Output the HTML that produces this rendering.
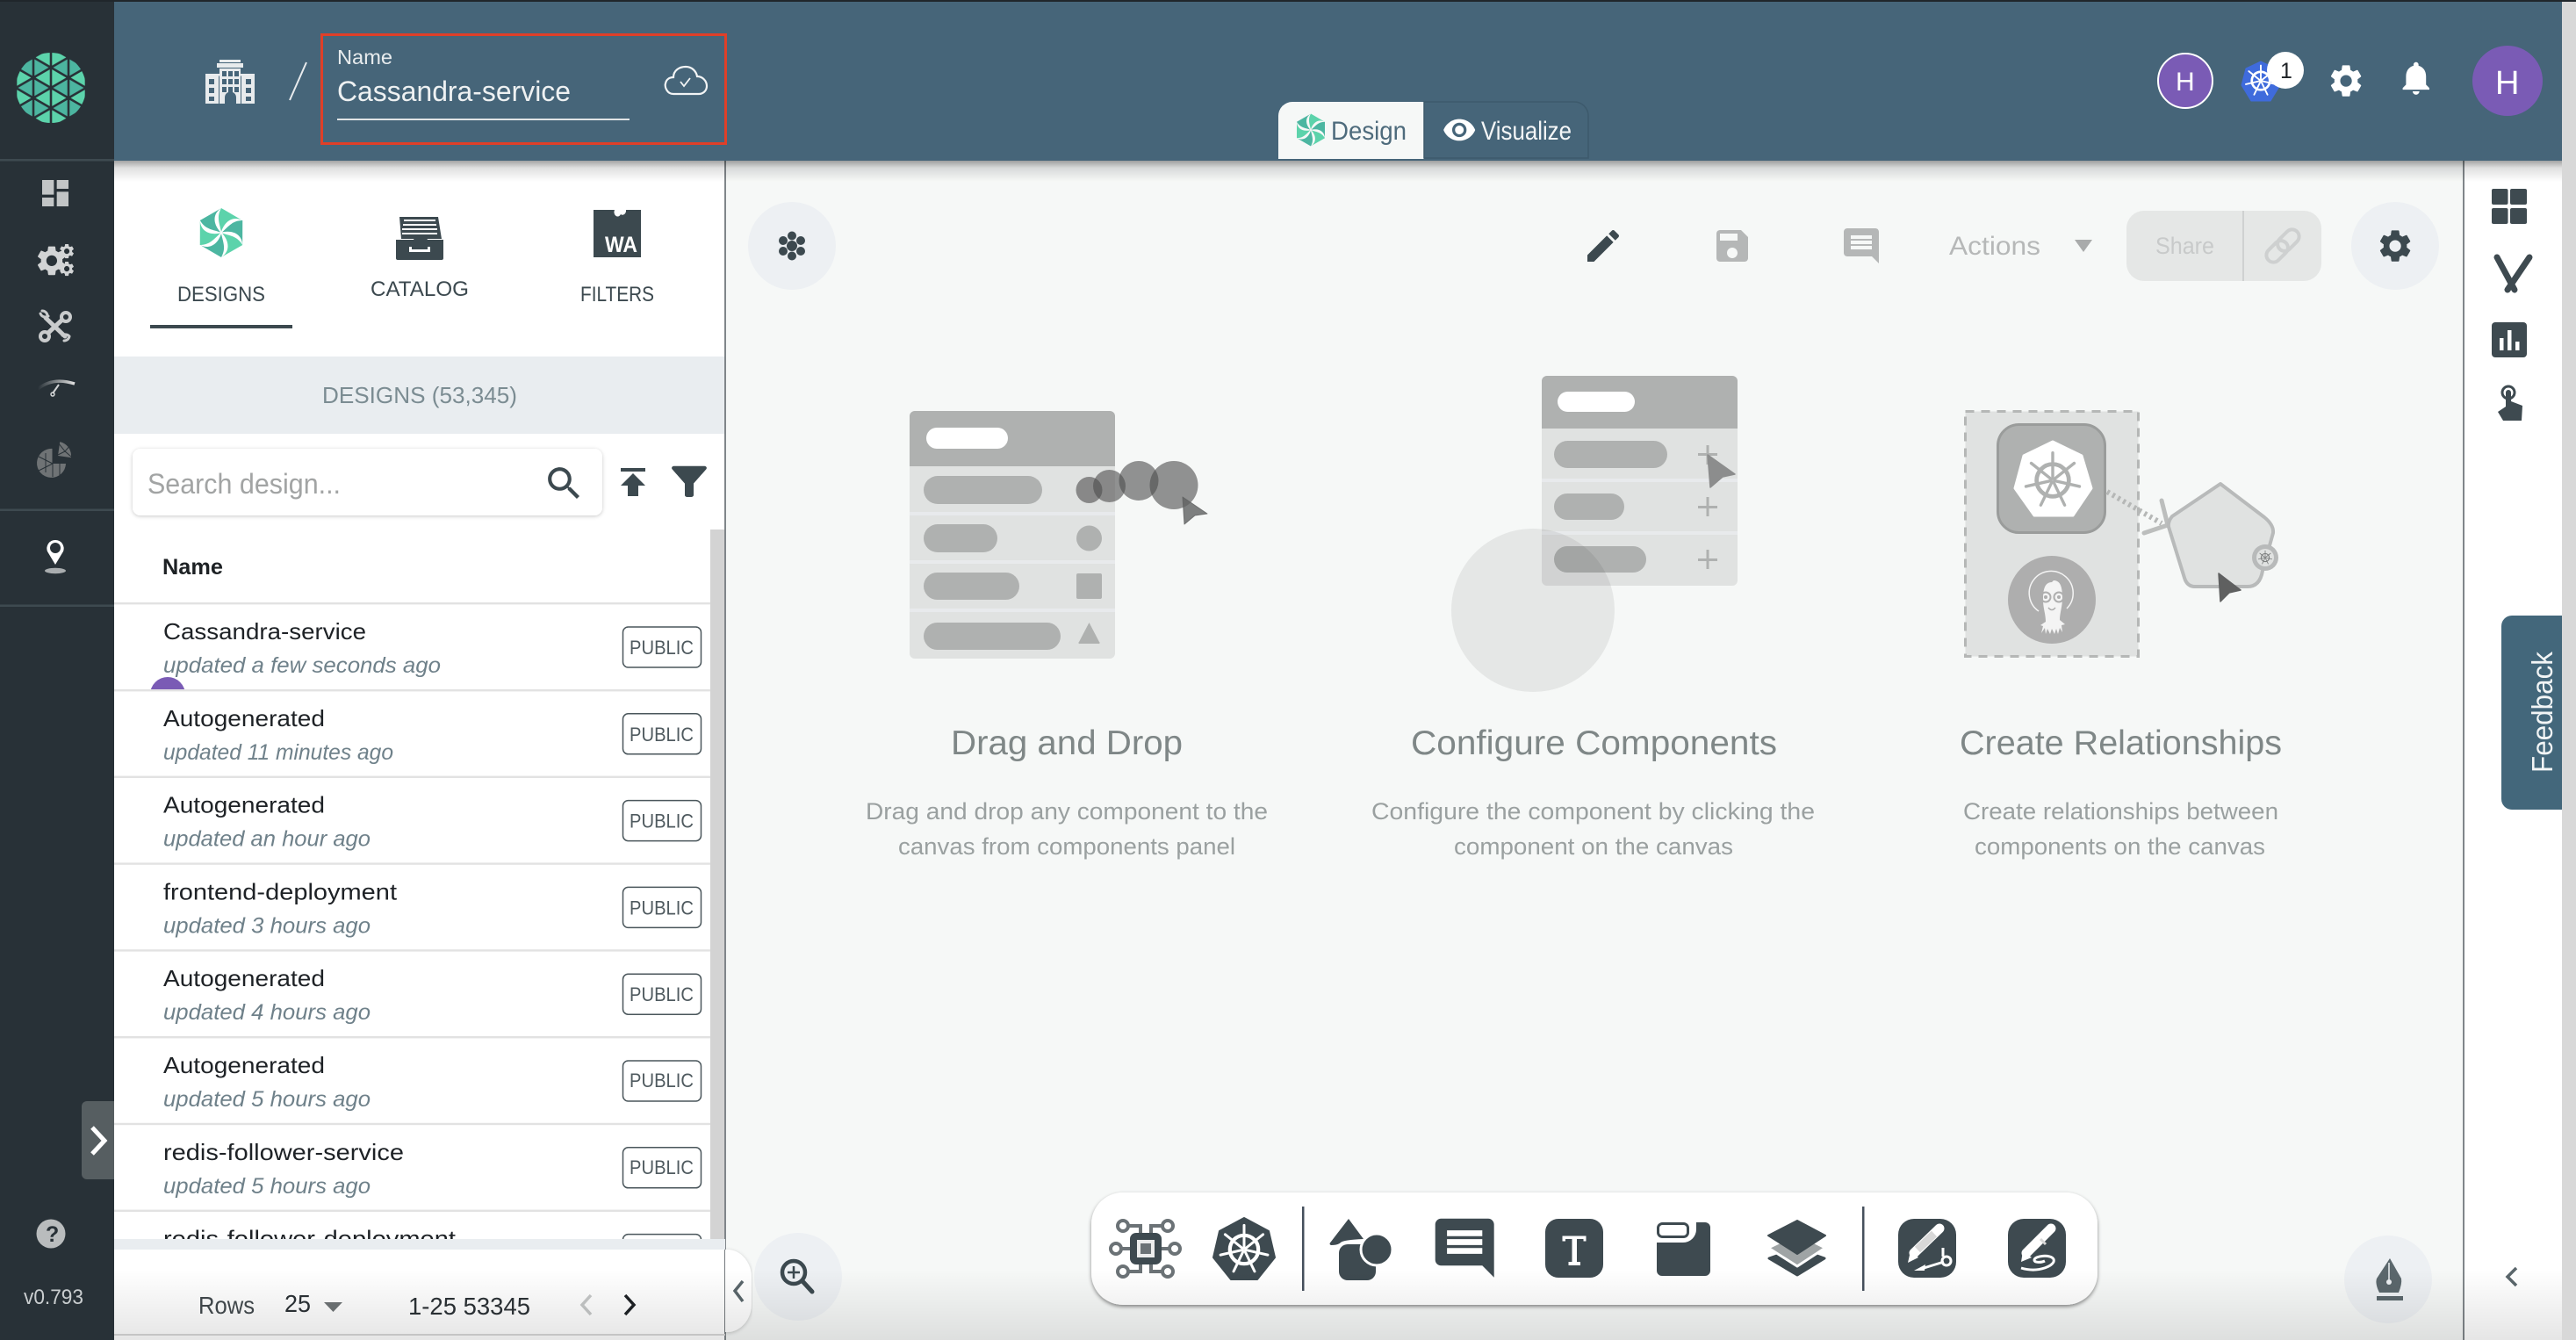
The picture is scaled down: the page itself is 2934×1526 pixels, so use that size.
<!DOCTYPE html>
<html lang="en"><head><meta charset="utf-8"><title>Designer</title>
<style>html,body{margin:0;padding:0;width:2934px;height:1526px;overflow:hidden;background:#f6f8f7}svg{display:block}text{font-family:"Liberation Sans",sans-serif}</style></head>
<body>
<svg xmlns="http://www.w3.org/2000/svg" width="2934" height="1526" viewBox="0 0 2934 1526">
<defs>
<path id="gearP" d="M19.14 12.94c.04-.3.06-.61.06-.94 0-.32-.02-.64-.07-.94l2.03-1.58c.18-.14.23-.41.12-.61l-1.92-3.32c-.12-.22-.37-.29-.59-.22l-2.39.96c-.5-.38-1.03-.7-1.62-.94l-.36-2.54c-.04-.24-.24-.41-.48-.41h-3.84c-.24 0-.43.17-.47.41l-.36 2.54c-.59.24-1.13.57-1.62.94l-2.39-.96c-.22-.08-.47 0-.59.22L2.74 8.87c-.12.21-.08.47.12.61l2.03 1.58c-.05.3-.09.63-.09.94s.02.64.07.94l-2.03 1.58c-.18.14-.23.41-.12.61l1.92 3.32c.12.22.37.29.59.22l2.39-.96c.5.38 1.03.7 1.62.94l.36 2.54c.05.24.24.41.48.41h3.84c.24 0 .44-.17.47-.41l.36-2.54c.59-.24 1.13-.56 1.62-.94l2.39.96c.22.08.47 0 .59-.22l1.92-3.32c.12-.22.07-.47-.12-.61l-2.01-1.58zM12 15.6c-1.98 0-3.6-1.62-3.6-3.6s1.62-3.6 3.6-3.6 3.6 1.62 3.6 3.6-1.62 3.6-3.6 3.6z"/>
<g id="wheel" fill="none" stroke-linecap="round">
<circle r="27" stroke-width="7"/>
<g stroke-width="5">
<line y1="-6" y2="-46"/><line y1="-6" y2="-46" transform="rotate(51.43)"/><line y1="-6" y2="-46" transform="rotate(102.86)"/><line y1="-6" y2="-46" transform="rotate(154.29)"/><line y1="-6" y2="-46" transform="rotate(205.71)"/><line y1="-6" y2="-46" transform="rotate(257.14)"/><line y1="-6" y2="-46" transform="rotate(308.57)"/>
</g>
<circle r="3" stroke-width="5"/>
</g>
<g id="swirl">
<path fill="#5cd3ab" d="M0,-50 L43,-25 C26,-34 8,-26 0,-2 C-4,-20 -10,-32 0,-50Z"/>
<path fill="#4cb6a1" d="M0,-50 L43,-25 C26,-34 8,-26 0,-2 C-4,-20 -10,-32 0,-50Z" transform="rotate(60)"/>
<path fill="#5cd3ab" d="M0,-50 L43,-25 C26,-34 8,-26 0,-2 C-4,-20 -10,-32 0,-50Z" transform="rotate(120)"/>
<path fill="#4cb6a1" d="M0,-50 L43,-25 C26,-34 8,-26 0,-2 C-4,-20 -10,-32 0,-50Z" transform="rotate(180)"/>
<path fill="#5cd3ab" d="M0,-50 L43,-25 C26,-34 8,-26 0,-2 C-4,-20 -10,-32 0,-50Z" transform="rotate(240)"/>
<path fill="#4cb6a1" d="M0,-50 L43,-25 C26,-34 8,-26 0,-2 C-4,-20 -10,-32 0,-50Z" transform="rotate(300)"/>
</g>
<pattern id="lat" patternUnits="userSpaceOnUse" x="38" y="88.45" width="40" height="23.1">
<rect width="40" height="23.1" fill="#5cd3ab"/>
<path d="M0,0 L0,23.1 L20,11.55Z M40,0 L40,23.1 L20,11.55Z" fill="#4cb5a0"/>
<path d="M0,0V23.1M20,0V23.1M40,0V23.1M0,0L40,23.1M0,23.1L40,0" stroke="#283137" stroke-width="2.6" fill="none"/>
</pattern>
<clipPath id="listClip"><rect x="130" y="600" width="679" height="811"/></clipPath>
<clipPath id="purpleClip"><rect x="130" y="700" width="400" height="85"/></clipPath>
<linearGradient id="hs" x1="0" y1="0" x2="0" y2="1"><stop offset="0" stop-color="#000" stop-opacity=".36"/><stop offset=".35" stop-color="#000" stop-opacity=".12"/><stop offset="1" stop-color="#000" stop-opacity="0"/></linearGradient>
<linearGradient id="bs" x1="0" y1="0" x2="0" y2="1"><stop offset="0" stop-color="#000" stop-opacity="0"/><stop offset="1" stop-color="#000" stop-opacity=".1"/></linearGradient>
<linearGradient id="ga" x1="0" y1="0" x2="1" y2="0"><stop offset="0" stop-color="#dcdcdc" stop-opacity="0"/><stop offset="1" stop-color="#e2e2e2"/></linearGradient>
<filter id="tb" x="-3%" y="-10%" width="106%" height="125%"><feDropShadow dx="0" dy="2" stdDeviation="2" flood-color="#000" flood-opacity=".45"/></filter>
<filter id="sb" x="-3%" y="-10%" width="106%" height="125%"><feDropShadow dx="0" dy="1" stdDeviation="2" flood-color="#000" flood-opacity=".22"/></filter>
</defs>

<!-- base -->
<rect width="2934" height="1526" fill="#f6f8f7"/>
<rect x="2806" y="183" width="112" height="1343" fill="#fff"/>
<rect x="2918" y="0" width="16" height="1526" fill="#d8d8d8"/>
<rect x="2805" y="183" width="2" height="1343" fill="#80868a"/>

<!-- left panel -->
<rect x="130" y="183" width="696" height="1343" fill="#fff"/>
<rect x="825" y="183" width="2" height="1343" fill="#80868a"/>
<use href="#swirl" transform="translate(252,265) scale(.56)"/>
<text x="202" y="343" font-size="24" fill="#3c494f" textLength="100" lengthAdjust="spacingAndGlyphs">DESIGNS</text>
<rect x="171" y="370" width="162" height="4" fill="#3c494f"/>
<!-- catalog icon -->
<path d="M457,247h44l4,25h-46z" fill="#3c494f" transform="translate(-2,0)"/>
<path d="M460,251h36M459,256h38M458,261h40M458,266h40" stroke="#fff" stroke-width="2"/>
<path d="M451,273h20l2,-4h12l2,4h18v21a2,2 0 0 1-2,2h-50a2,2 0 0 1-2,-2z" fill="#3c494f"/>
<path d="M466,281v6h24v-6h-3v3h-18v-3z" fill="#fff"/>
<text x="422" y="337" font-size="24" fill="#3c494f" textLength="112" lengthAdjust="spacingAndGlyphs">CATALOG</text>
<!-- WA icon -->
<path d="M676,239h24a4,5 0 0 0 7,5a4,5 0 0 0 6,-5h17v54h-54z" fill="#3c494f"/>
<text x="689" y="287" font-size="25" font-weight="bold" fill="#fff" textLength="37" lengthAdjust="spacingAndGlyphs">WA</text>
<text x="661" y="343" font-size="24" fill="#3c494f" textLength="84" lengthAdjust="spacingAndGlyphs">FILTERS</text>
<rect x="130" y="406" width="695" height="88" fill="#e9edf0"/>
<text x="367" y="459" font-size="26" fill="#7b8c92" textLength="222" lengthAdjust="spacingAndGlyphs">DESIGNS (53,345)</text>
<rect x="151" y="511" width="535" height="76" rx="9" fill="#fff" filter="url(#sb)"/>
<text x="168" y="562" font-size="32" fill="#a2a4a4" textLength="220" lengthAdjust="spacingAndGlyphs">Search design...</text>
<path transform="translate(618,526) scale(2.05)" fill="#3c494f" d="M15.5 14h-.79l-.28-.27C15.41 12.59 16 11.11 16 9.5 16 5.91 13.09 3 9.5 3S3 5.91 3 9.5 5.91 16 9.5 16c1.61 0 3.09-.59 4.23-1.57l.27.28v.79l5 4.99L20.49 19l-4.99-5zm-6 0C7.01 14 5 11.99 5 9.5S7.01 5 9.5 5 14 7.01 14 9.5 11.99 14 9.5 14z"/>
<path transform="translate(697,525) scale(2)" fill="#3c494f" d="M5 4v2h14V4H5zm0 10h4v6h6v-6h4l-7-7-7 7z"/>
<path transform="translate(755,522) scale(2.5,2.2)" fill="#3c494f" d="M4.25 5.61C6.27 8.2 10 13 10 13v6c0 .55.45 1 1 1h2c.55 0 1-.45 1-1v-6s3.72-4.8 5.74-7.39c.51-.66.04-1.61-.79-1.61H5.04c-.83 0-1.3.95-.79 1.61z"/>
<text x="185" y="654" font-size="25" font-weight="bold" fill="#1d2124" textLength="69" lengthAdjust="spacingAndGlyphs">Name</text>

<!-- list -->
<rect x="809" y="603" width="16" height="808" fill="#d3d3d3"/>
<circle cx="191" cy="791" r="20" fill="#7a5bb5" clip-path="url(#purpleClip)"/>
<g fill="#e2e2e2">
<rect x="130" y="686" width="679" height="2.4"/><rect x="130" y="785" width="679" height="2.4"/><rect x="130" y="883.6" width="679" height="2.4"/><rect x="130" y="982.4" width="679" height="2.4"/><rect x="130" y="1081.2" width="679" height="2.4"/><rect x="130" y="1180" width="679" height="2.4"/><rect x="130" y="1278.8" width="679" height="2.4"/><rect x="130" y="1377.6" width="679" height="2.4"/>
</g>
<g clip-path="url(#listClip)">
<g font-size="26" fill="#1e2226">
<text x="186" y="728" textLength="231" lengthAdjust="spacingAndGlyphs">Cassandra-service</text>
<text x="186" y="827" textLength="184" lengthAdjust="spacingAndGlyphs">Autogenerated</text>
<text x="186" y="925.6" textLength="184" lengthAdjust="spacingAndGlyphs">Autogenerated</text>
<text x="186" y="1024.4" textLength="266" lengthAdjust="spacingAndGlyphs">frontend-deployment</text>
<text x="186" y="1123.2" textLength="184" lengthAdjust="spacingAndGlyphs">Autogenerated</text>
<text x="186" y="1222" textLength="184" lengthAdjust="spacingAndGlyphs">Autogenerated</text>
<text x="186" y="1320.8" textLength="274" lengthAdjust="spacingAndGlyphs">redis-follower-service</text>
<text x="186" y="1419.6" textLength="333" lengthAdjust="spacingAndGlyphs">redis-follower-deployment</text>
</g>
<g font-size="25" font-style="italic" fill="#6f818a">
<text x="186" y="766" textLength="316" lengthAdjust="spacingAndGlyphs">updated a few seconds ago</text>
<text x="186" y="865" textLength="262" lengthAdjust="spacingAndGlyphs">updated 11 minutes ago</text>
<text x="186" y="963.6" textLength="236" lengthAdjust="spacingAndGlyphs">updated an hour ago</text>
<text x="186" y="1062.4" textLength="236" lengthAdjust="spacingAndGlyphs">updated 3 hours ago</text>
<text x="186" y="1161.2" textLength="236" lengthAdjust="spacingAndGlyphs">updated 4 hours ago</text>
<text x="186" y="1260" textLength="236" lengthAdjust="spacingAndGlyphs">updated 5 hours ago</text>
<text x="186" y="1358.8" textLength="236" lengthAdjust="spacingAndGlyphs">updated 5 hours ago</text>
</g>
<g fill="#fff" stroke="#4a565b" stroke-width="1.5">
<rect x="709.5" y="714" width="89" height="46" rx="6"/><rect x="709.5" y="812.8" width="89" height="46" rx="6"/><rect x="709.5" y="911.6" width="89" height="46" rx="6"/><rect x="709.5" y="1010.4" width="89" height="46" rx="6"/><rect x="709.5" y="1109.2" width="89" height="46" rx="6"/><rect x="709.5" y="1208" width="89" height="46" rx="6"/><rect x="709.5" y="1306.8" width="89" height="46" rx="6"/><rect x="709.5" y="1405.6" width="89" height="46" rx="6"/>
</g>
<g font-size="22" fill="#4f5a5f">
<text x="717" y="745" textLength="73" lengthAdjust="spacingAndGlyphs">PUBLIC</text>
<text x="717" y="843.8" textLength="73" lengthAdjust="spacingAndGlyphs">PUBLIC</text>
<text x="717" y="942.6" textLength="73" lengthAdjust="spacingAndGlyphs">PUBLIC</text>
<text x="717" y="1041.4" textLength="73" lengthAdjust="spacingAndGlyphs">PUBLIC</text>
<text x="717" y="1140.2" textLength="73" lengthAdjust="spacingAndGlyphs">PUBLIC</text>
<text x="717" y="1238" textLength="73" lengthAdjust="spacingAndGlyphs">PUBLIC</text>
<text x="717" y="1336.8" textLength="73" lengthAdjust="spacingAndGlyphs">PUBLIC</text>
</g>
</g>
<rect x="130" y="1411" width="696" height="12" fill="#e9edf0"/>
<text x="226" y="1496" font-size="28" fill="#42494d" textLength="64" lengthAdjust="spacingAndGlyphs">Rows</text>
<text x="324" y="1494" font-size="28" fill="#2c3236" textLength="30" lengthAdjust="spacingAndGlyphs">25</text>
<path d="M369,1483h21l-10.5,11z" fill="#6f7476"/>
<text x="465" y="1497" font-size="28" fill="#2c3236" textLength="139" lengthAdjust="spacingAndGlyphs">1-25 53345</text>
<path d="M673,1475l-10,11l10,11" fill="none" stroke="#c6c8c8" stroke-width="3.5"/>
<path d="M712,1475l10,11l-10,11" fill="none" stroke="#1e2226" stroke-width="3.5"/>
<rect x="130" y="1519" width="696" height="2" fill="#d8d8d8"/>
<path d="M826,1423h2a28,32 0 0 1 28,32v30a28,32 0 0 1-28,32h-2z" fill="#fff" filter="url(#sb)"/>
<path d="M846,1459l-9,11l9,12" fill="none" stroke="#5a666b" stroke-width="3.5"/>
<circle cx="909" cy="1454" r="50" fill="#edf0f3"/>
<circle cx="904" cy="1449" r="13" fill="none" stroke="#3c494f" stroke-width="4.5"/>
<path d="M914,1459l11,12" stroke="#3c494f" stroke-width="5" stroke-linecap="round"/>
<path d="M904,1442v14M897,1449h14" stroke="#3c494f" stroke-width="2.5"/>

<!-- sidebar -->
<rect y="0" width="130" height="1526" fill="#283137"/>
<rect y="181" width="130" height="2.5" fill="#3e4a50"/><rect y="579.5" width="130" height="2.5" fill="#3e4a50"/><rect y="688.5" width="130" height="2.5" fill="#3e4a50"/>
<circle cx="58" cy="100" r="40" fill="url(#lat)"/>
<path transform="translate(43,200) scale(1.667)" fill="#c2c5c6" d="M3 13h8V3H3v10zm0 8h8v-6H3v6zm10 0h8V11h-8v10zm0-18v6h8V3h-8z"/>
<use href="#gearP" fill="#d2d4d5" transform="translate(38.5,276.5) scale(1.7)"/>
<use href="#gearP" fill="#d2d4d5" transform="translate(66,276) scale(.84)"/>
<use href="#gearP" fill="#d2d4d5" transform="translate(66,296) scale(.84)"/>
<g fill="none" stroke="#c9cbcc" stroke-linecap="round">
<path d="M55,379L71,364" stroke-width="5"/>
<path d="M52,362L74,383" stroke-width="5"/>
<circle cx="51" cy="383" r="5" stroke-width="4" fill="#283137"/><circle cx="75" cy="361" r="5" stroke-width="4" fill="#283137"/>
<path d="M46,357a6,6 0 0 0 9,3M48,354a6,6 0 0 1 6,5M73,388a6,6 0 0 0 6,-5M71,382a6,6 0 0 1 8,1" stroke-width="3"/>
</g>
<path d="M43,443Q60,429 85,437" fill="none" stroke="url(#ga)" stroke-width="3.5"/>
<path d="M60,448L67,438" stroke="#d2d4d5" stroke-width="2"/><circle cx="60" cy="449" r="2" fill="none" stroke="#d2d4d5" stroke-width="1.5"/>
<path d="M60,511A16.5,16.5 0 1 0 75,528L60,528Z" fill="#6f7375"/>
<path d="M67,504A16,16 0 0 1 82,520L67,520Z" fill="#6f7375" transform="translate(-1,-1) rotate(8 67 520)"/>
<path d="M44,520l16,8M44,536l16,-8M60,511v32M52,516v22M68,528v14M66,504l8,10l7,-8M66,518l8,-4l7,6" stroke="#283137" stroke-width="1" fill="none"/>
<path d="M63,615a9.5,9.5 0 0 1 9,13l-9,15l-9,-15a9.5,9.5 0 0 1 9,-13z" fill="#fff"/><circle cx="63" cy="624" r="6" fill="#283137"/>
<ellipse cx="63" cy="650" rx="12" ry="3.2" fill="#a9adaf"/>
<path d="M93,1260a6,6 0 0 1 6,-6h31v89h-31a6,6 0 0 1-6,-6z" fill="#565e61"/>
<path d="M105,1284l14,15l-14,15" fill="none" stroke="#fff" stroke-width="5"/>
<circle cx="58" cy="1405" r="16.5" fill="#b9bcbd"/>
<text x="52" y="1414" font-size="25" font-weight="bold" fill="#283137">?</text>
<text x="27" y="1485" font-size="24" fill="#c9cdcf" textLength="68" lengthAdjust="spacingAndGlyphs">v0.793</text>

<!-- header -->
<rect x="130" y="183" width="2788" height="24" fill="url(#hs)"/>
<rect x="130" y="2" width="2788" height="181" fill="#466579"/>
<rect width="2934" height="2" fill="#20262b"/>
<g fill="#e8ebed">
<rect x="250" y="68" width="24" height="3"/><rect x="247" y="72" width="30" height="5"/>
<rect x="250" y="78" width="24" height="40"/><rect x="234" y="85" width="15" height="33"/><rect x="275" y="85" width="15" height="33"/><rect x="234" y="84" width="56" height="2.5"/>
</g>
<g fill="#466579">
<rect x="253" y="81" width="5" height="6"/><rect x="260" y="81" width="5" height="6"/><rect x="267" y="81" width="5" height="6"/>
<rect x="253" y="90" width="5" height="6"/><rect x="260" y="90" width="5" height="6"/><rect x="267" y="90" width="5" height="6"/>
<rect x="253" y="99" width="5" height="6"/><rect x="260" y="99" width="5" height="6"/><rect x="267" y="99" width="5" height="6"/>
<rect x="238" y="90" width="6" height="6"/><rect x="238" y="100" width="6" height="6"/><rect x="238" y="110" width="6" height="5"/>
<rect x="280" y="90" width="6" height="6"/><rect x="280" y="100" width="6" height="6"/><rect x="280" y="110" width="6" height="5"/>
<path d="M256,118v-7a6.5,6.5 0 0 1 13,0v7z"/>
</g>
<path d="M330,114L349,71" stroke="#e8ebed" stroke-width="2"/>
<rect x="366.5" y="39.500" width="460" height="124" fill="none" stroke="#e03f28" stroke-width="3"/>
<text x="384" y="73" font-size="23" fill="#e8ecee" textLength="63" lengthAdjust="spacingAndGlyphs">Name</text>
<text x="384" y="115" font-size="32" fill="#eef1f2" textLength="266" lengthAdjust="spacingAndGlyphs">Cassandra-service</text>
<rect x="384" y="135" width="333" height="2" fill="#dfe3e5"/>
<path d="M767,107C759,107 757,98 758,95C759,90 763,88 767,88C767,80 774,76 781,76C788,76 793,81 794,87C800,87 805,92 805,98C805,104 800,107 796,107Z" fill="none" stroke="#f2f4f5" stroke-width="2.2"/>
<path d="M775,93l4,5l7,-9" fill="none" stroke="#f2f4f5" stroke-width="1.8"/>
<!-- tabs -->
<path d="M1456,181V132a16,16 0 0 1 16,-16H1622V181Z" fill="#f6f8f7"/>
<path d="M1622,180V116H1793a16,16 0 0 1 16,16V180Z" fill="#466579" stroke="#3d5a6c" stroke-width="1.5"/>
<use href="#swirl" transform="translate(1493,148) scale(.37)"/>
<text x="1516" y="159" font-size="30" fill="#4e6b7c" textLength="86" lengthAdjust="spacingAndGlyphs">Design</text>
<path transform="translate(1642.5,128.3) scale(1.64)" fill="#fff" d="M12 4.5C7 4.5 2.73 7.61 1 12c1.73 4.39 6 7.5 11 7.5s9.27-3.11 11-7.5c-1.73-4.39-6-7.5-11-7.5zM12 17c-2.76 0-5-2.24-5-5s2.24-5 5-5 5 2.24 5 5-2.24 5-5 5zm0-8c-1.66 0-3 1.34-3 3s1.34 3 3 3 3-1.34 3-3-1.34-3-3-3z"/>
<text x="1687" y="159" font-size="30" fill="#f4f6f7" textLength="103" lengthAdjust="spacingAndGlyphs">Visualize</text>
<!-- header right -->
<circle cx="2489" cy="92" r="31" fill="#7a5bb5" stroke="#fff" stroke-width="2"/>
<text x="2478" y="103" font-size="30" fill="#fff">H</text>
<polygon points="2575,70 2592,78 2597,97 2586,115 2564,115 2553,97 2558,78" fill="#3f6bdc" stroke="#3f6bdc" stroke-width="1" stroke-linejoin="round"/>
<use href="#wheel" stroke="#fff" transform="translate(2575,92) scale(.38)"/>
<circle cx="2603" cy="80" r="21" fill="#fff"/>
<text x="2597" y="89" font-size="25" fill="#1e2226">1</text>
<use href="#gearP" fill="#fff" transform="translate(2650,70) scale(1.84)"/>
<path transform="translate(2729,66) scale(1.9)" fill="#fff" d="M12 22c1.1 0 2-.9 2-2h-4c0 1.1.9 2 2 2zm6-6v-5c0-3.07-1.63-5.64-4.5-6.32V4c0-.83-.67-1.5-1.5-1.5s-1.5.67-1.5 1.5v.68C7.64 5.36 6 7.92 6 11v5l-2 2v1h16v-1l-2-2z"/>
<circle cx="2856" cy="92" r="40" fill="#7a5bb5"/>
<text x="2842" y="107" font-size="38" fill="#fff">H</text>

<!-- canvas top buttons -->
<circle cx="902" cy="280" r="50" fill="#edf0f3"/>
<g fill="#3c494f"><circle cx="902" cy="280" r="6"/><circle cx="902" cy="268.5" r="5"/><circle cx="912" cy="274" r="5"/><circle cx="912" cy="286" r="5"/><circle cx="902" cy="291.5" r="5"/><circle cx="892" cy="286" r="5"/><circle cx="892" cy="274" r="5"/></g>
<path transform="translate(1802,256) scale(2)" fill="#3c494f" d="M3 17.25V21h3.75L17.81 9.94l-3.75-3.75L3 17.25zM20.71 7.04c.39-.39.39-1.02 0-1.41l-2.34-2.34c-.39-.39-1.02-.39-1.41 0l-1.83 1.83 3.75 3.75 1.83-1.83z"/>
<path transform="translate(1949,256) scale(2)" fill="#b5b7b7" d="M17 3H5c-1.11 0-2 .9-2 2v14c0 1.1.89 2 2 2h14c1.1 0 2-.9 2-2V7l-4-4zm-5 16c-1.66 0-3-1.34-3-3s1.34-3 3-3 3 1.34 3 3-1.34 3-3 3zm3-10H5V5h10v4z"/>
<path transform="translate(2096,256) scale(2)" fill="#b5b7b7" d="M21.99 4c0-1.1-.89-2-1.99-2H4c-1.1 0-2 .9-2 2v12c0 1.1.9 2 2 2h14l4 4-.01-18zM18 14H6v-2h12v2zm0-3H6V9h12v2zm0-3H6V6h12v2z"/>
<text x="2220" y="290" font-size="30" fill="#b6b8b8" textLength="104" lengthAdjust="spacingAndGlyphs">Actions</text>
<path d="M2363,273h20l-10,14z" fill="#a9abab"/>
<rect x="2422" y="240" width="222" height="80" rx="20" fill="#e5e7e6"/>
<rect x="2554" y="240" width="2" height="80" fill="#cfd1d1"/>
<text x="2455" y="289" font-size="27" fill="#c8caca" textLength="67" lengthAdjust="spacingAndGlyphs">Share</text>
<g fill="none" stroke="#ced0d0" stroke-width="4" transform="rotate(-45 2600 280)"><rect x="2577" y="272" width="28" height="16" rx="8"/><rect x="2595" y="272" width="28" height="16" rx="8"/></g>
<circle cx="2728" cy="280" r="50" fill="#edf0f3"/>
<use href="#gearP" fill="#3c494f" transform="translate(2706,258) scale(1.84)"/>

<!-- right rail -->
<g fill="#3e4a50"><rect x="2838" y="215" width="18.5" height="18" rx="2"/><rect x="2859" y="215" width="19" height="18" rx="2"/><rect x="2838" y="237" width="18.5" height="18" rx="2"/><rect x="2859" y="237" width="19" height="18" rx="2"/>
<rect x="2838" y="367" width="40" height="40" rx="4"/></g>
<path d="M2844,293L2864,330M2881,293L2856,330" stroke="#3e4a50" stroke-width="7" stroke-linecap="round"/>
<g fill="#fff"><rect x="2847" y="385" width="4.5" height="14"/><rect x="2856" y="376" width="4.5" height="23"/><rect x="2865" y="389" width="4.5" height="10"/></g>
<circle cx="2857" cy="447" r="7" fill="none" stroke="#3e4a50" stroke-width="3"/>
<path d="M2854,447a3,3 0 0 1 6,0V457L2873,462L2872,479H2851L2845,469L2854,463Z" fill="#3e4a50"/>
<path d="M2918,701H2861a12,12 0 0 0-12,12V910a12,12 0 0 0 12,12H2918Z" fill="#43677b"/>
<text transform="translate(2907,880) rotate(-90)" font-size="33" fill="#f2f5f6" textLength="138" lengthAdjust="spacingAndGlyphs">Feedback</text>

<!-- card 1 -->
<rect x="1036" y="468" width="234" height="282" rx="6" fill="#e0e2e1"/>
<path d="M1036,531V474a6,6 0 0 1 6,-6H1264a6,6 0 0 1 6,6V531Z" fill="#afb1b0"/>
<rect x="1055" y="487" width="93" height="24" rx="12" fill="#fff"/>
<g fill="#e8eaec"><rect x="1036" y="583" width="234" height="4"/><rect x="1036" y="638" width="234" height="4"/><rect x="1036" y="693" width="234" height="4"/></g>
<g fill="#afb1b0"><rect x="1052" y="542" width="135" height="32" rx="16"/><rect x="1052" y="597" width="84" height="32" rx="16"/><rect x="1052" y="652" width="109" height="31" rx="15.5"/><rect x="1052" y="709" width="156" height="31" rx="15.5"/>
<circle cx="1240.5" cy="613" r="14.5"/><rect x="1226" y="653" width="29" height="29" rx="2"/><path d="M1240.5,709L1252,731a1,1 0 0 1-1,2H1230a1,1 0 0 1-1,-2Z"/></g>
<g fill="#4d4d4d" fill-opacity=".6"><circle cx="1240.5" cy="558" r="15"/><circle cx="1263.5" cy="553.5" r="18.5"/><circle cx="1297" cy="547.5" r="22.5"/><circle cx="1337" cy="552.5" r="27.5"/></g>
<path d="M1347,566L1375,585L1361,587L1349,597Z" fill="#5f6060" fill-opacity=".8" stroke="#5f6060" stroke-opacity=".8" stroke-linejoin="round"/>

<!-- card 2 -->
<rect x="1756" y="428" width="223" height="239" rx="6" fill="#e0e2e1"/>
<path d="M1756,488V434a6,6 0 0 1 6,-6H1973a6,6 0 0 1 6,6V488Z" fill="#afb1b0"/>
<rect x="1774" y="446" width="88" height="23" rx="11.5" fill="#fff"/>
<g fill="#e8eaec"><rect x="1756" y="545" width="223" height="4"/><rect x="1756" y="605" width="223" height="4"/></g>
<g fill="#afb1b0"><rect x="1770" y="502" width="129" height="31" rx="15.5"/><rect x="1770" y="562" width="80" height="30" rx="15"/><rect x="1770" y="622" width="105" height="30" rx="15"/>
<path d="M1934,516h22v3h-22zM1943.5,507h3v22h-3zM1934,576h22v3h-22zM1943.5,566h3v22h-3zM1934,636h22v3h-22zM1943.5,626h3v22h-3z"/></g>
<circle cx="1746" cy="695" r="93" fill="#000" fill-opacity=".065"/>
<path d="M1945,518L1976,540L1962,543L1948,555Z" fill="#8c8d8d" stroke="#8c8d8d" stroke-width="1.5" stroke-linejoin="round"/>

<!-- card 3 -->
<rect x="2238.5" y="468.5" width="197" height="279" fill="#e0e2e1" stroke="#b5b7b6" stroke-width="3" stroke-dasharray="10 8"/>
<rect x="2275.5" y="483.5" width="122" height="123" rx="24" fill="#afb1b0" stroke="#9a9c9b" stroke-width="3"/>
<polygon points="2338,503 2371,519 2382,556 2361,587 2317,587 2295,556 2305,519" fill="#fff" stroke="#fff" stroke-width="3" stroke-linejoin="round"/>
<use href="#wheel" stroke="#afb1b0" transform="translate(2338,547) scale(.68)"/>
<circle cx="2337" cy="683" r="50" fill="#aeaeae"/>
<g fill="none" stroke="#f4f4f4"><path d="M2322,696a25,25 0 1 1 32,-3" stroke-width="1.5"/></g>
<path d="M2337,663c-8,0 -10,8 -10,20c0,10 3,16 3,25l-6,4l3,1l-2,8l4,-6l1,7l2,-6l3,6l2,-6l3,6l2,-6l2,6l2,-7l3,5l-1,-8l4,-1l-6,-5c0,-8 3,-15 3,-25c0,-12 -2,-20 -10,-20z" fill="#f4f4f4"/>
<circle cx="2330" cy="680" r="5.5" fill="none" stroke="#aeaeae" stroke-width="2"/><circle cx="2345" cy="680" r="5.5" fill="none" stroke="#aeaeae" stroke-width="2"/><circle cx="2330" cy="680" r="2" fill="#aeaeae"/><circle cx="2345" cy="680" r="2" fill="#aeaeae"/>
<path d="M2333,692q4,5 8,0" stroke="#aeaeae" stroke-width="1.5" fill="none"/>
<path d="M2400,560L2462,596" stroke="#b5b7b6" stroke-width="6" stroke-dasharray="3 4"/>
<path d="M2462,570L2469,598L2442,607" fill="none" stroke="#bcbebd" stroke-width="5" stroke-linecap="round"/>
<path d="M2529,551l50,38q11,9 10,18l-12,43q-3,18 -17,18h-60q-9,0 -12,-10l-18,-58q-1,-6 4,-12z" fill="#e0e2e1" stroke="#b8baba" stroke-width="4" stroke-linejoin="round"/>
<circle cx="2580" cy="635" r="15" fill="#b8baba"/><circle cx="2580" cy="635" r="10" fill="#e0e2e1"/>
<use href="#wheel" stroke="#7e8080" transform="translate(2580,635) scale(.17)"/>
<path d="M2527,653L2552,672L2539,675L2529,685Z" fill="#5f6060" stroke="#5f6060" stroke-width="1.5" stroke-linejoin="round"/>

<!-- copy -->
<g fill="#7f8787" font-size="39">
<text x="1083" y="859" textLength="264" lengthAdjust="spacingAndGlyphs">Drag and Drop</text>
<text x="1607" y="859" textLength="417" lengthAdjust="spacingAndGlyphs">Configure Components</text>
<text x="2232" y="859" textLength="367" lengthAdjust="spacingAndGlyphs">Create Relationships</text>
</g>
<g fill="#9aa0a0" font-size="27">
<text x="986" y="933" textLength="458" lengthAdjust="spacingAndGlyphs">Drag and drop any component to the</text>
<text x="1023" y="973" textLength="384" lengthAdjust="spacingAndGlyphs">canvas from components panel</text>
<text x="1562" y="933" textLength="505" lengthAdjust="spacingAndGlyphs">Configure the component by clicking the</text>
<text x="1656" y="973" textLength="318" lengthAdjust="spacingAndGlyphs">component on the canvas</text>
<text x="2236" y="933" textLength="359" lengthAdjust="spacingAndGlyphs">Create relationships between</text>
<text x="2249" y="973" textLength="331" lengthAdjust="spacingAndGlyphs">components on the canvas</text>
</g>

<!-- toolbar -->
<rect x="1243" y="1358" width="1146" height="128" rx="36" fill="#fff" filter="url(#tb)"/>
<rect x="1483" y="1374" width="2.5" height="96" fill="#454f5c"/><rect x="2121" y="1374" width="2.5" height="96" fill="#454f5c"/>
<g fill="none" stroke="#6b7276" stroke-width="4">
<circle cx="1279" cy="1396" r="6"/><path d="M1285,1396H1299V1404"/><circle cx="1330" cy="1396" r="6"/><path d="M1324,1396H1311V1404"/>
<circle cx="1271" cy="1422" r="6"/><path d="M1277,1422H1287"/><circle cx="1338" cy="1422" r="6"/><path d="M1332,1422H1323"/>
<circle cx="1279" cy="1448" r="6"/><path d="M1285,1448H1299V1440"/><circle cx="1330" cy="1448" r="6"/><path d="M1324,1448H1311V1440"/>
</g>
<rect x="1287" y="1404" width="36" height="36" rx="7" fill="#3e4a50"/><rect x="1295" y="1412" width="20" height="20" fill="#eceded"/><rect x="1299" y="1416" width="12" height="12" fill="#6b7276"/>
<polygon points="1417,1387 1445,1402 1452,1432 1432,1457 1402,1457 1382,1432 1389,1402" fill="#3e4a50" stroke="#3e4a50" stroke-width="2" stroke-linejoin="round"/>
<use href="#wheel" stroke="#fff" transform="translate(1417,1423) scale(.6)"/>
<path d="M1536,1388L1553,1411Q1530,1412 1527,1415Q1524,1418 1516,1418Q1513,1417 1516,1414Z" fill="#3e4a50"/>
<rect x="1525" y="1417" width="42" height="41" rx="10" fill="#3e4a50"/>
<circle cx="1568" cy="1423" r="18" fill="#3e4a50" stroke="#fff" stroke-width="3"/>
<path transform="translate(1628,1381) scale(3.35)" fill="#3e4a50" d="M21.99 4c0-1.1-.89-2-1.99-2H4c-1.1 0-2 .9-2 2v12c0 1.1.9 2 2 2h14l4 4-.01-18zM18 14H6v-2h12v2zm0-3H6V9h12v2zm0-3H6V6h12v2z"/>
<rect x="1760" y="1388" width="66" height="67" rx="15" fill="#3e4a50"/>
<path d="M1780,1413v-5h26v5h-2v-2.5h-8.5v27h4v3h-12.5v-3h4v-27h-8.5v2.5z" fill="#fff" stroke="#fff" stroke-width="1"/>
<path d="M1932,1392h10a6,6 0 0 1 6,6v49a6,6 0 0 1-6,6h-49a6,6 0 0 1-6,-6v-32h30a15,15 0 0 0 15,-15z" fill="#3e4a50"/>
<rect x="1888.5" y="1393.5" width="34" height="15" rx="5" fill="none" stroke="#3e4a50" stroke-width="3"/>
<polygon points="2047,1422 2078,1433 2047,1452 2015,1433" fill="#3e4a50" stroke="#3e4a50" stroke-width="3" stroke-linejoin="round"/>
<polygon points="2047,1405 2079,1421 2047,1442 2014,1421" fill="#9fa4a5" stroke="#fff" stroke-width="3" stroke-linejoin="round"/>
<polygon points="2047,1390 2079,1407 2047,1428 2014,1407" fill="#3e4a50" stroke="#3e4a50" stroke-width="2" stroke-linejoin="round"/>
<rect x="2162" y="1388" width="66" height="67" rx="18" fill="#3e4a50"/>
<path d="M2180,1427L2209,1399" stroke="#fff" stroke-width="11" stroke-linecap="round"/><path d="M2184,1423L2203,1405" stroke="#d8d8d8" stroke-width="9"/><path d="M2173,1438L2176,1425L2185,1432Z" fill="#fff"/>
<path d="M2214,1437L2188,1445" stroke="#fff" stroke-width="3"/><path d="M2180,1447L2193,1440L2192,1447Z" fill="#fff"/><circle cx="2217" cy="1436" r="5" fill="none" stroke="#fff" stroke-width="3"/><path d="M2213,1421V1431" stroke="#fff" stroke-width="3"/>
<rect x="2287" y="1388" width="66" height="67" rx="18" fill="#3e4a50"/>
<path d="M2308,1427L2336,1399" stroke="#fff" stroke-width="11" stroke-linecap="round"/><path d="M2324,1411L2330,1417" stroke="#d8d8d8" stroke-width="3"/><path d="M2302,1437L2304,1425L2314,1432Z" fill="#fff"/>
<path d="M2302,1444c20,6 40,-3 37,-10c-3,-6 -22,-4 -22,1c0,3 8,3 12,1" fill="none" stroke="#fff" stroke-width="3"/>
<circle cx="2720" cy="1457" r="50" fill="#edf0f3"/>
<path d="M2722,1433L2735,1456Q2736,1462 2732,1472H2710Q2705,1462 2707,1456Z" fill="#5b676c"/><circle cx="2721" cy="1460" r="3" fill="#edf0f3"/><path d="M2721,1438V1458" stroke="#edf0f3" stroke-width="1.5"/><rect x="2707" y="1476" width="30" height="5" fill="#5b676c"/>
<path d="M2866,1444l-10,10l10,10" fill="none" stroke="#5a666b" stroke-width="3.5"/>

<!-- bottom fade -->
<rect x="130" y="1445" width="2788" height="81" fill="url(#bs)"/>
</svg>
</body></html>
